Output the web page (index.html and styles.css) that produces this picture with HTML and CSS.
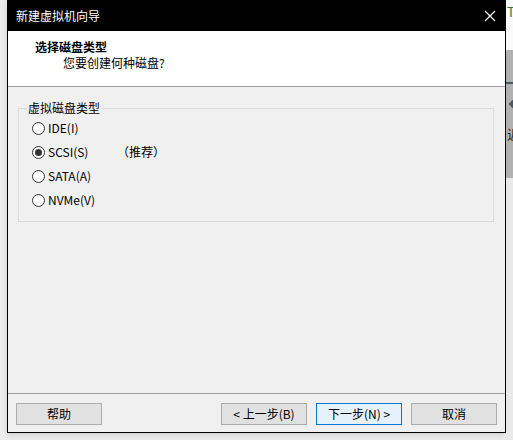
FILE: index.html
```html
<!DOCTYPE html>
<html lang="zh-CN">
<head>
<meta charset="utf-8">
<title>新建虚拟机向导</title>
<link rel="stylesheet" href="styles.css">
</head>
<body>
<div class="desk">
  <div class="lpad"></div>
  <div class="win">
    <div class="titlebar">
      <span class="ttext">新建虚拟机向导</span>
      <svg class="close" width="12" height="12" viewBox="0 0 12 12"><path d="M1 1L11 11M11 1L1 11" stroke="#fff" stroke-width="1.2" fill="none"/></svg>
    </div>
    <div class="header">
      <div class="htitle">选择磁盘类型</div>
      <div class="hsub">您要创建何种磁盘?</div>
    </div>
    <div class="content">
      <fieldset class="group">
        <legend>虚拟磁盘类型</legend>
        <div class="row"><span class="radio"></span><span class="lbl">IDE(I)</span></div>
        <div class="row"><span class="radio checked"></span><span class="lbl">SCSI(S)</span><span class="rec">（推荐）</span></div>
        <div class="row"><span class="radio"></span><span class="lbl">SATA(A)</span></div>
        <div class="row"><span class="radio"></span><span class="lbl">NVMe(V)</span></div>
      </fieldset>
    </div>
    <div class="footer">
      <button class="btn">帮助</button>
      <div class="navbtns">
        <button class="btn">&lt; 上一步(B)</button>
        <button class="btn default">下一步(N) &gt;</button>
        <button class="btn">取消</button>
      </div>
    </div>
  </div>
  <div class="rpad">
    <div class="r-top"><span class="r-t">T</span></div>
    <div class="r-gray">
      <span class="r-dash"></span>
      <span class="r-diamond"></span>
      <span class="r-char">近</span>
    </div>
    <div class="r-bottom"></div>
  </div>
</div>
</body>
</html>
```

FILE: styles.css
```css
html, body {
  margin: 0;
  padding: 0;
}
body {
  width: 513px;
  height: 440px;
  overflow: hidden;
  background: #ececec;
  font-family: "Noto Sans CJK SC", "Noto Sans", sans-serif;
  font-size: 12px;
  color: #000;
}
.desk {
  display: flex;
  height: 440px;
}
.lpad {
  width: 7px;
  flex: none;
  background: #ededed;
}
.win {
  width: 499px;
  height: 433px;
  flex: none;
  box-sizing: border-box;
  border: 1px solid #000;
  border-top: none;
  background: #f0f0f0;
  display: flex;
  flex-direction: column;
  box-shadow: 0 2px 6px rgba(0,0,0,0.12);
}
.titlebar {
  height: 31px;
  flex: none;
  background: #000;
  color: #fff;
  display: flex;
  align-items: center;
  justify-content: space-between;
  padding: 0 9px 0 8px;
  line-height: 16px;
}
.ttext {
  font-size: 12px;
}
.close {
  display: block;
}
.header {
  height: 56px;
  flex: none;
  background: #fff;
  border-bottom: 1px solid #a0a0a0;
  padding: 8px 0 0 27px;
  box-sizing: border-box;
  line-height: 16px;
}
.htitle {
  font-weight: bold;
}
.hsub {
  margin-left: 28px;
}
.content {
  flex: 1;
  padding: 0 11px 0 10px;
}
.group {
  margin: 13px 0 0 0;
  padding: 0 0 9px 8px;
  border: 1px solid #dcdcdc;
  min-width: 0;
}
.group legend {
  padding: 0 1px;
  line-height: 16px;
}
.row {
  height: 24px;
  display: flex;
  align-items: center;
  margin-left: 5px;
}
.radio {
  width: 13px;
  height: 13px;
  box-sizing: border-box;
  border: 1px solid #333;
  border-radius: 50%;
  background: #fff;
  margin-right: 3px;
  display: flex;
  align-items: center;
  justify-content: center;
}
.radio.checked::after {
  content: "";
  width: 7px;
  height: 7px;
  border-radius: 50%;
  background: #333;
}
.lbl {
  line-height: 16px;
}
.row .lbl {
  min-width: 69px;
}
.rec {
  line-height: 16px;
}
.footer {
  height: 39px;
  flex: none;
  border-top: 1px solid #a0a0a0;
  display: flex;
  justify-content: space-between;
  align-items: flex-start;
  padding: 9px 8px 0 8px;
  box-sizing: border-box;
}
.navbtns {
  display: flex;
  gap: 9px;
}
.btn {
  width: 86px;
  height: 22px;
  box-sizing: border-box;
  border: 1px solid #adadad;
  background: #e1e1e1;
  font-family: inherit;
  font-size: 12px;
  color: #000;
  padding: 0;
  line-height: 18px;
}
.btn.default {
  border-color: #0078d7;
  background: #e5f1fb;
}
.rpad {
  width: 7px;
  flex: none;
  display: flex;
  flex-direction: column;
  overflow: hidden;
}
.r-top {
  height: 50px;
  background: #fafafa;
}
.r-t {
  display: block;
  color: #1f7a3c;
  font-size: 13px;
  line-height: 13px;
  margin: 5px 0 0 1px;
}
.r-gray {
  height: 128px;
  background: #b1b1b1;
  display: flex;
  flex-direction: column;
  align-items: flex-start;
}
.r-dash {
  display: block;
  width: 7px;
  height: 2px;
  background: #4a5866;
  margin-top: 32px;
}
.r-diamond {
  display: block;
  width: 12px;
  height: 12px;
  background: #4a5866;
  transform: rotate(45deg);
  margin: 14px 0 0 5px;
}
.r-char {
  display: block;
  font-size: 13px;
  line-height: 14px;
  margin: 17px 0 0 1px;
  color: #222;
}
.r-bottom {
  flex: 1;
  background: #e9e9e9;
}
```
